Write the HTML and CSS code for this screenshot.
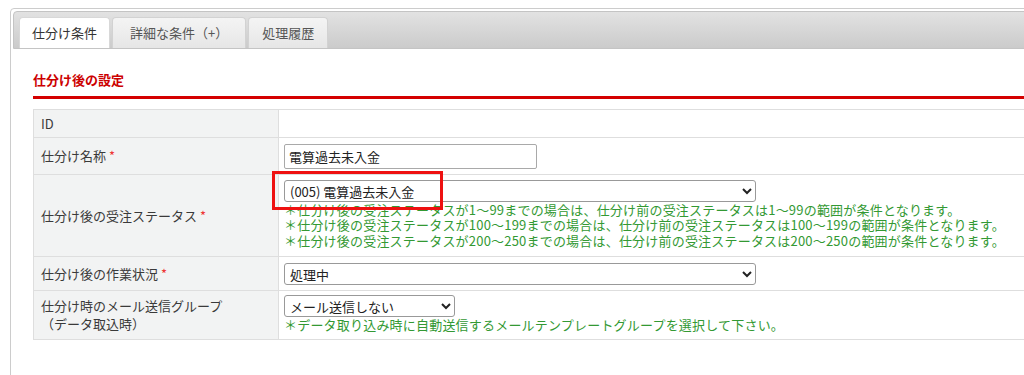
FILE: index.html
```html
<!DOCTYPE html>
<html lang="ja">
<head>
    <meta charset="UTF-8">
    <meta name="viewport" content="width=device-width, initial-scale=1.0">
    <title>仕分け条件</title>
    <link rel="stylesheet" href="styles.css">
</head>
<body>
    <div class="panel">
        <div class="tabs">
            <div class="tab active">仕分け条件</div>
            <div class="tab wide">詳細な条件（+）</div>
            <div class="tab">処理履歴</div>
        </div>
        <div class="content">
            <h2 class="section-title">仕分け後の設定</h2>
            <table class="form-table">
                <tr class="row-id">
                    <th>ID</th>
                    <td></td>
                </tr>
                <tr class="row-name">
                    <th>仕分け名称 <span class="req">*</span></th>
                    <td><input type="text" class="name-input" value="電算過去未入金"></td>
                </tr>
                <tr class="row-status">
                    <th>仕分け後の受注ステータス <span class="req">*</span></th>
                    <td>
                        <div class="status-cell">
                            <select class="select-wide">
                                <option>(005) 電算過去未入金</option>
                            </select>
                            <div class="highlight"></div>
                        </div>
                        <p class="note">＊仕分け後の受注ステータスが1～99までの場合は、仕分け前の受注ステータスは1～99の範囲が条件となります。</p>
                        <p class="note">＊仕分け後の受注ステータスが100～199までの場合は、仕分け前の受注ステータスは100～199の範囲が条件となります。</p>
                        <p class="note">＊仕分け後の受注ステータスが200～250までの場合は、仕分け前の受注ステータスは200～250の範囲が条件となります。</p>
                    </td>
                </tr>
                <tr class="row-work">
                    <th>仕分け後の作業状況 <span class="req">*</span></th>
                    <td>
                        <select class="select-wide">
                            <option>処理中</option>
                        </select>
                    </td>
                </tr>
                <tr class="row-mail">
                    <th>仕分け時のメール送信グループ<br>（データ取込時）</th>
                    <td>
                        <select class="select-small">
                            <option>メール送信しない</option>
                        </select>
                        <p class="note">＊データ取り込み時に自動送信するメールテンプレートグループを選択して下さい。</p>
                    </td>
                </tr>
            </table>
        </div>
    </div>
</body>
</html>
```

FILE: styles.css
```css
html, body {
    overflow: hidden;
}

body {
    font-family: "Noto Sans CJK JP", "Noto Sans", sans-serif;
    font-size: 13px;
    color: #3a3a3a;
    background-color: white;
    margin: 0;
    padding: 0;
}

.panel {
    width: 1100px;
    height: 400px;
    margin: 8px 0 0 10px;
    border: 1px solid #cccccc;
    border-radius: 4px;
    padding: 2px;
}

/* barra de pestañas */
.tabs {
    display: flex;
    gap: 2px;
    height: 31px;
    padding: 5px 0 0 5px;
    background: linear-gradient(#e2e2e2, #cbcbcb);
    border: 1px solid #c4c4c4;
    border-radius: 4px 4px 0 0;
}

.tab {
    height: 31px;
    padding: 0 13px;
    line-height: 30px;
    color: #555;
    background: linear-gradient(#f4f4f4, #e6e6e6);
    border: 1px solid #d2d2d2;
    border-bottom: none;
    border-radius: 4px 4px 0 0;
    box-sizing: border-box;
}

.tab.wide {
    padding: 0 17px;
}

.tab.active {
    padding: 0 12px;
    color: #333;
    background: white;
    border-color: #d8d8d8;
}

.content {
    padding: 21px 0 0 20px;
}

.section-title {
    margin: 0;
    font-size: 13px;
    font-weight: bold;
    line-height: 20px;
    color: #cc0000;
    padding-bottom: 6px;
    border-bottom: 3px solid #d40000;
}

.form-table {
    width: 1060px;
    margin-top: 10px;
    border-collapse: collapse;
}

.form-table th,
.form-table td {
    border: 1px solid #dedede;
    text-align: left;
    vertical-align: middle;
    font-weight: normal;
}

.form-table th {
    width: 237px;
    padding: 0 0 0 7px;
    background-color: #f2f3f3;
    line-height: 18px;
}

.form-table td {
    padding: 0 5px;
}

.row-id th,
.row-id td {
    height: 27px;
}

.row-name td {
    height: 36px;
}

.row-status td {
    height: 78px;
    padding-bottom: 3px;
}

.row-work td {
    height: 33px;
}

.row-mail td {
    height: 46px;
    padding-bottom: 2px;
}

.req {
    color: #ee3333;
}

.name-input {
    width: 253px;
    height: 25px;
    box-sizing: border-box;
    border: 1px solid #a9a9a9;
    border-radius: 2px;
    padding: 0 4px;
    font-family: inherit;
    font-size: 13px;
    color: #222;
}

select {
    height: 22px;
    box-sizing: border-box;
    border: 1px solid #999;
    border-radius: 3px;
    padding-left: 1px;
    font-family: inherit;
    font-size: 13px;
    color: #222;
    background: white;
    display: block;
}

.select-wide {
    width: 472px;
}

.select-small {
    width: 171px;
}

.status-cell {
    position: relative;
}

/* recuadro rojo de aviso */
.highlight {
    position: absolute;
    left: -12px;
    top: -9px;
    width: 165px;
    height: 33px;
    border: 3px solid #ee1111;
}

.note {
    margin: 0;
    color: #339933;
    line-height: 15.5px;
    letter-spacing: 0.2px;
    white-space: nowrap;
}
```
